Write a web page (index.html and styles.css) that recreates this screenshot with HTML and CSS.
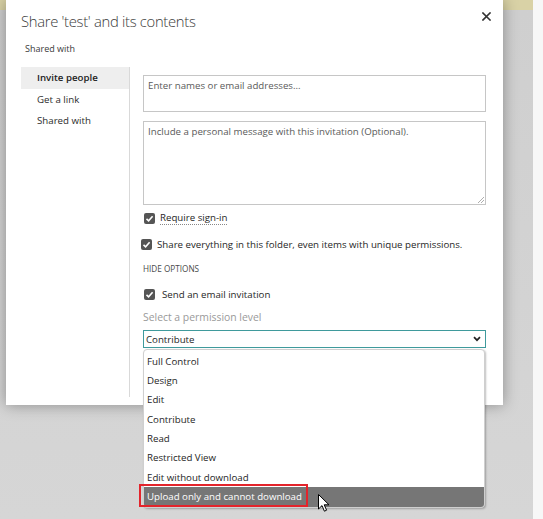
FILE: index.html
```html
<!DOCTYPE html>
<html>
<head>
<meta charset="utf-8">
<link rel="stylesheet" href="styles.css">
</head>
<body>
<div class="dialog">
  <div class="header">
    <h1 class="title">Share 'test' and its contents</h1>
    <svg class="close" width="9" height="9" viewBox="0 0 9 9"><path d="M1 1L8 8M8 1L1 8" stroke="#333" stroke-width="1.6" stroke-linecap="square"/></svg>
  </div>
  <div class="subtitle">Shared with</div>
  <div class="main">
    <nav class="nav">
      <div class="nav-item active">Invite people</div>
      <div class="nav-item">Get a link</div>
      <div class="nav-item">Shared with</div>
    </nav>
    <div class="content">
      <div class="field names">Enter names or email addresses...</div>
      <div class="field message">Include a personal message with this invitation (Optional).
        <svg class="grip" width="6" height="6" viewBox="0 0 6 6"><path d="M6 0L0 6M6 3L3 6" stroke="#999" stroke-width="0.8"/></svg>
      </div>
      <label class="check row1"><span class="box"><svg width="11" height="11" viewBox="0 0 11 11"><path d="M2.5 5.8L4.6 7.8L8.6 3.2" fill="none" stroke="#fff" stroke-width="1.6"/></svg></span><span class="dotted">Require sign-in</span></label>
      <label class="check row2"><span class="box"><svg width="11" height="11" viewBox="0 0 11 11"><path d="M2.5 5.8L4.6 7.8L8.6 3.2" fill="none" stroke="#fff" stroke-width="1.6"/></svg></span><span>Share everything in this folder, even items with unique permissions.</span></label>
      <div class="hide">HIDE OPTIONS</div>
      <label class="check row3"><span class="box"><svg width="11" height="11" viewBox="0 0 11 11"><path d="M2.5 5.8L4.6 7.8L8.6 3.2" fill="none" stroke="#fff" stroke-width="1.6"/></svg></span><span>Send an email invitation</span></label>
      <div class="perm-label">Select a permission level</div>
      <div class="select-wrap">
        <div class="select"><span>Contribute</span>
          <svg class="chev" width="8" height="6" viewBox="0 0 8 6"><path d="M1 1.2L4 4.2L7 1.2" fill="none" stroke="#222" stroke-width="1.7"/></svg>
        </div>
        <div class="dropdown">
          <div class="opt">Full Control</div>
          <div class="opt">Design</div>
          <div class="opt">Edit</div>
          <div class="opt">Contribute</div>
          <div class="opt">Read</div>
          <div class="opt">Restricted View</div>
          <div class="opt">Edit without download</div>
          <div class="opt selected">Upload only and cannot download</div>
        </div>
        <div class="redbox"></div>
        <svg class="cursor" width="12" height="19" viewBox="0 0 12 19"><path d="M0.5 0.5L0.5 15L4 11.6L6.4 17.2L8.6 16.2L6.2 10.8L11 10.8Z" fill="#fff" stroke="#000" stroke-width="1"/></svg>
      </div>
    </div>
  </div>
</div>
</body>
</html>
```
FILE: styles.css
```css
html, body {
  margin: 0;
  padding: 0;
}
body {
  width: 543px;
  height: 519px;
  overflow: hidden;
  position: relative;
  font-family: "Open Sans", "Noto Sans", sans-serif;
  color: #2b2b2b;
  background:
    linear-gradient(to right, transparent 533px, #f7f7f7 533px),
    linear-gradient(to bottom, #d9d2a6 0, #d9d2a6 10px, #cfcfcf 10px, #d6d6d6 519px);
}
.dialog {
  margin-left: 6px;
  width: 497px;
  height: 405px;
  background: #fff;
  box-shadow: 0 0 14px rgba(0, 0, 0, 0.35);
  position: relative;
  box-sizing: border-box;
  padding-top: 10px;
}
.header {
  display: flex;
  justify-content: space-between;
  align-items: flex-start;
  padding-left: 15px;
  padding-right: 12px;
}
.title {
  margin: 0;
  font-size: 14.8px;
  font-weight: 300;
  line-height: 22px;
  color: #3a3a3a;
  letter-spacing: -0.3px;
}
.close {
  margin-top: 2px;
}
.subtitle {
  margin-top: 10px;
  padding-left: 19px;
  font-size: 9px;
  line-height: 14px;
  color: #3a3a3a;
}
.main {
  display: flex;
  margin-top: 11px;
  height: 330px;
}
.nav {
  margin-left: 15px;
  width: 108px;
}
.nav-item {
  height: 21px;
  line-height: 21px;
  padding-left: 16px;
  font-size: 9.7px;
  color: #2b2b2b;
}
.nav-item.active {
  height: 22px;
  line-height: 22px;
  background: #eeeeee;
  font-weight: 600;
  color: #222;
}
.content {
  border-left: 1px solid #d9d9d9;
  padding-left: 13px;
  width: 343px;
  display: flex;
  flex-direction: column;
}
.field {
  border: 1px solid #c6c6c6;
  box-sizing: border-box;
  padding: 3px 4px;
  font-size: 9.7px;
  line-height: 14px;
  color: #5a5a5a;
  position: relative;
}
.names {
  margin-top: 8px;
  height: 37px;
}
.message {
  margin-top: 9px;
  height: 84px;
}
.grip {
  position: absolute;
  right: 1px;
  bottom: 1px;
}
.check {
  display: flex;
  align-items: center;
  height: 18px;
  font-size: 9.7px;
  color: #262626;
}
.box {
  width: 11px;
  height: 11px;
  border-radius: 2px;
  background: #555;
  display: inline-flex;
  margin-right: 5px;
  flex: none;
}
.row1 {
  margin-top: 4px;
  padding-left: 1px;
}
.row2 {
  margin-top: 8px;
  margin-left: -2px;
}
.row3 {
  margin-top: 9px;
  padding-left: 1px;
}
.row3 .box {
  margin-right: 7px;
}
.dotted {
  border-bottom: 1px dotted #888;
  line-height: 13px;
}
.hide {
  margin-top: 9px;
  font-size: 8.2px;
  line-height: 14px;
  color: #4a4a4a;
}
.perm-label {
  margin-top: 6px;
  font-size: 10.4px;
  line-height: 16px;
  color: #9a9a9a;
}
.select-wrap {
  margin-top: 5px;
  position: relative;
}
.select {
  height: 18px;
  box-sizing: border-box;
  border: 1px solid #3f9a9c;
  display: flex;
  align-items: center;
  justify-content: space-between;
  padding: 0 4px 0 2px;
  font-size: 9.7px;
  color: #1e1e1e;
}
.dropdown {
  position: absolute;
  top: 19px;
  left: 0;
  width: 342px;
  box-sizing: border-box;
  background: #fff;
  border: 1px solid #cfcfcf;
  border-radius: 4px;
  overflow: hidden;
  padding-top: 1.5px;
  box-shadow: 1px 1px 2px rgba(0, 0, 0, 0.25);
  z-index: 2;
}
.opt {
  height: 19.4px;
  line-height: 19.4px;
  padding-left: 3px;
  font-size: 9.7px;
  color: #1e1e1e;
}
.opt.selected {
  background: #767676;
  color: #fff;
}
.redbox {
  position: absolute;
  top: 154px;
  left: -4px;
  width: 169px;
  height: 23px;
  box-sizing: border-box;
  border: 2px solid #e3242b;
  z-index: 3;
}
.cursor {
  position: absolute;
  top: 164px;
  left: 175px;
  z-index: 4;
}
```
